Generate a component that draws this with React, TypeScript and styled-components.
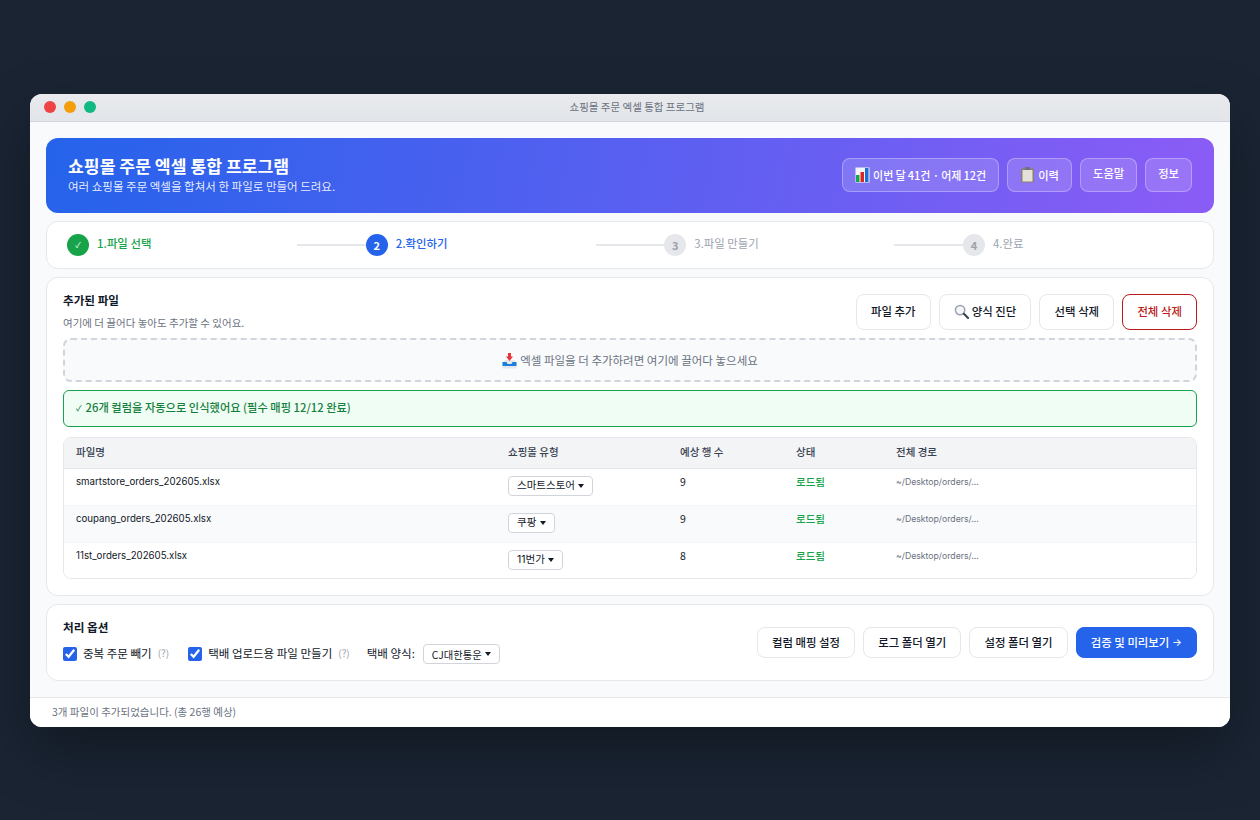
import styled, { createGlobalStyle } from "styled-components"

const GlobalStyle = createGlobalStyle`
    html, body {
        margin: 0;
        padding: 0;
        background: #1a2433;
    }

    * {
        box-sizing: border-box;
    }
`

const Page = styled.div`
    width: 1260px;
    height: 820px;
    padding: 94px 30px 0;
    background: #1a2433;
    color: #111827;
    font-family: "Noto Sans CJK KR", "Noto Sans", sans-serif;
    font-size: 12px;
    overflow: hidden;
`

const Window = styled.div`
    display: flex;
    flex-direction: column;
    height: 633px;
    border-radius: 12px;
    overflow: hidden;
    background: #f8fafc;
    box-shadow: 0 24px 60px rgba(0, 0, 0, 0.3);
`

const TitleBar = styled.div`
    position: relative;
    display: flex;
    align-items: center;
    justify-content: center;
    height: 28px;
    padding: 0 0 2px 14px;
    background: linear-gradient(180deg, #e8eaed, #e2e5e9);
    border-bottom: 1px solid #d1d5db;
    color: #6b7280;
    font-size: 10.5px;
`

const Lights = styled.div`
    position: absolute;
    left: 14px;
    top: 7px;
    display: flex;
    gap: 8px;
`

const Light = styled.span<{ $colour: string }>`
    width: 12px;
    height: 12px;
    border-radius: 50%;
    background: ${p => p.$colour};
`

const Content = styled.div`
    flex: 1;
    display: flex;
    flex-direction: column;
    gap: 8px;
    padding: 16px 16px 16px;
`

const Banner = styled.header`
    display: flex;
    align-items: center;
    justify-content: space-between;
    height: 75px;
    padding: 0 22px 2px;
    border-radius: 12px;
    background: linear-gradient(100deg, #2563eb, #8b5cf6);
    color: white;
`

const BannerTitle = styled.h1`
    margin: -2px 0 0;
    font-size: 17.2px;
    font-weight: 700;
    line-height: 24px;
`

const BannerSub = styled.p`
    margin: 0;
    font-size: 11.5px;
    line-height: 16px;
    color: rgba(255, 255, 255, 0.9);
`

const BannerActions = styled.div`
    display: flex;
    gap: 8px;
`

const BannerButton = styled.div`
    display: flex;
    gap: 3px;
    height: 34px;
    padding: 5px 12px 0;
    border: 1px solid rgba(255, 255, 255, 0.3);
    border-radius: 8px;
    background: rgba(255, 255, 255, 0.15);
    font-size: 11.3px;
    font-weight: 500;
    line-height: 18px;
`

const BannerEmojiButton = styled(BannerButton)`
    align-items: center;
    padding-top: 1px;
`

const BannerStat = styled.span`
    font-size: 11px;
    word-spacing: -0.3px;
`

const Card = styled.section`
    border: 1px solid #e5e7eb;
    border-radius: 12px;
    background: white;
`

const Steps = styled(Card)`
    display: flex;
    align-items: center;
    height: 48px;
    padding: 0 20px;
`

const Step = styled.div`
    flex: 0 0 230px;
    display: flex;
    align-items: center;
    gap: 8px;
`

const StepCircle = styled.span<{ $state: "done" | "active" | "todo" }>`
    display: flex;
    align-items: center;
    justify-content: center;
    width: 22px;
    height: 22px;
    padding-bottom: 1px;
    border-radius: 50%;
    font-size: ${p => (p.$state === "done" ? "8px" : "11px")};
    font-weight: ${p => (p.$state === "done" ? 400 : 700)};
    color: ${p => (p.$state === "todo" ? "#9ca3af" : "white")};
    background: ${p => (p.$state === "done" ? "#16a34a" : p.$state === "active" ? "#2563eb" : "#e5e7eb")};
`

const StepLabel = styled.span<{ $state: "done" | "active" | "todo" }>`
    margin-top: -5px;
    font-size: 11.4px;
    font-weight: ${p => (p.$state === "todo" ? 400 : 500)};
    color: ${p => (p.$state === "done" ? "#16a34a" : p.$state === "active" ? "#2563eb" : "#9ca3af")};
`

const StepLine = styled.span`
    flex: 1;
    height: 2px;
    background: #e5e7eb;
`

const FilesCard = styled(Card)`
    height: 319px;
    padding: 16px;
`

const FilesTop = styled.div`
    display: flex;
    justify-content: space-between;
    height: 36px;
`

const SectionTitle = styled.h2`
    margin: -1px 0 0;
    font-size: 11.6px;
    font-weight: 700;
    line-height: 14px;
`

const SectionHint = styled.p`
    margin: 9px 0 0;
    font-size: 10.5px;
    line-height: 14px;
    color: #6b7280;
`

const ButtonRow = styled.div`
    display: flex;
    gap: 8px;
`

const Button = styled.button<{ $variant?: "primary" | "danger" }>`
    display: flex;
    align-items: center;
    gap: 3px;
    height: 100%;
    padding: 0 14.15px 2px;
    border: 1px solid ${p => (p.$variant === "primary" ? "#2563eb" : p.$variant === "danger" ? "#b91c1c" : "#e5e7eb")};
    border-radius: 8px;
    background: ${p => (p.$variant === "primary" ? "#2563eb" : "white")};
    color: ${p => (p.$variant === "primary" ? "white" : p.$variant === "danger" ? "#b91c1c" : "#111827")};
    font: inherit;
    font-size: 11.4px;
    font-weight: 500;
`

const SmallArrow = styled.span`
    font-family: Inter, sans-serif;
    font-size: 10px;
`

const DropZone = styled.div`
    display: flex;
    align-items: center;
    justify-content: center;
    gap: 3px;
    height: 44px;
    margin-top: 8px;
    border: 2px dashed #d1d5db;
    border-radius: 8px;
    background: #f8fafc;
    color: #6b7280;
    font-size: 11.5px;
`

const DropIcon = styled.span`
    display: flex;
    margin-top: 2px;
`

const Notice = styled.div`
    display: flex;
    align-items: center;
    gap: 4px;
    height: 37px;
    margin-top: 8px;
    padding: 0 12px 3px;
    border: 1px solid #16a34a;
    border-radius: 6px;
    background: #f0fdf4;
    color: #15803d;
    font-size: 11.25px;
    font-weight: 500;
`

const NoticeTick = styled.span`
    font-size: 8px;
`

const Table = styled.div`
    margin-top: 10px;
    border: 1px solid #e5e7eb;
    border-radius: 8px;
    overflow: hidden;
`

const Row = styled.div<{ $shade?: boolean }>`
    display: grid;
    grid-template-columns: 432px 172px 116px 100px 1fr;
    height: 37px;
    border-bottom: 1px solid #f3f4f6;
    background: ${p => (p.$shade ? "#f8fafc" : "white")};

    &:last-child {
        height: 35px;
        border-bottom: 0;
    }
`

const HeadRow = styled(Row)`
    height: 31px;
    border-bottom-color: #e5e7eb;
    background: #f3f4f6;
`

const HeadCell = styled.div`
    padding: 0 12px;
    font-size: 10.5px;
    font-weight: 500;
    line-height: 27px;
    color: #374151;
`

const Cell = styled.div`
    padding: 6px 12px 0;
    font-size: 10.5px;
    line-height: 14px;
`

const FileCell = styled(Cell)`
    font-family: Inter, "Noto Sans CJK KR", sans-serif;
    font-size: 9.7px;
`

const LoadedCell = styled(Cell)`
    color: #16a34a;
    font-weight: 500;
`

const PathCell = styled(Cell)`
    color: #6b7280;
    font-family: Inter, "Noto Sans CJK KR", sans-serif;
    font-size: 8.7px;
`

const Dropdown = styled.span`
    display: inline-flex;
    align-items: center;
    gap: 3.5px;
    height: 20px;
    padding: 0 8px;
    border: 1px solid #d1d5db;
    border-radius: 4px;
    background: white;
    color: #111827;
    font-family: Inter, "Noto Sans CJK KR", sans-serif;
    font-size: 10.5px;
`

const CourierDropdown = styled(Dropdown)`
    gap: 3px;
    font-family: "Noto Sans CJK KR", sans-serif;
    font-size: 10.3px;
`

const SelectCell = styled(Cell)`
    padding-top: 7px;
`

const Caret = styled.span`
    width: 0;
    height: 0;
    border-left: 3px solid transparent;
    border-right: 3px solid transparent;
    border-top: 4px solid #111827;
`

const OptionsCard = styled(Card)`
    display: flex;
    align-items: center;
    justify-content: space-between;
    height: 77px;
    padding: 0 16px;
`

const OptionsLeft = styled.div`
    display: flex;
    flex-direction: column;
    gap: 10px;
`

const OptionRow = styled.div`
    display: flex;
    align-items: center;
    height: 20px;
`

const OptionLabel = styled.label`
    display: flex;
    align-items: center;
    gap: 6px;
    font-size: 11.5px;
`

const OptionText = styled.span`
    padding-bottom: 3px;
`

const Check = styled.input`
    width: 14px;
    height: 14px;
    margin: 0;
    accent-color: #2563eb;
`

const Help = styled.span`
    margin: 0 19px 3px 6px;
    color: #9ca3af;
    font-size: 10px;
`

const CourierLabel = styled.span`
    margin: 0 8px 3px -2px;
    font-size: 11.5px;
`

const OptionButtons = styled(ButtonRow)`
    height: 31px;
`

const StatusBar = styled.footer`
    display: flex;
    align-items: center;
    height: 30px;
    padding: 0 22px 2px;
    border-top: 1px solid #e5e7eb;
    background: white;
    color: #6b7280;
    font-size: 10.5px;
`

const ChartIcon = () => (
    <svg width="15" height="16" viewBox="0 0 15 16">
        <rect x="0.5" y="0.5" width="14" height="15" fill="#f3f4f6" />
        <rect x="1" y="8" width="3.5" height="7" fill="#16a34a" />
        <rect x="5.5" y="5" width="3.5" height="10" fill="#dc2626" />
        <rect x="10" y="1" width="3.5" height="14" fill="#1d6fd1" />
    </svg>
)

const ClipboardIcon = () => (
    <svg width="15" height="16" viewBox="0 0 15 16">
        <rect x="1" y="1.5" width="13" height="14" rx="1" fill="#8a7f6f" />
        <rect x="2.5" y="3" width="10" height="11.5" fill="#e4e1d8" />
        <rect x="5" y="0" width="5" height="3" rx="0.5" fill="#6b7280" />
    </svg>
)

const SearchIcon = () => (
    <svg width="15" height="15" viewBox="0 0 16 16">
        <circle cx="6.5" cy="6.5" r="5" fill="#f3f6fa" stroke="#9ca3af" strokeWidth="1.6" />
        <path d="M10.5 10.5 L15 15" stroke="#374151" strokeWidth="2.2" strokeLinecap="round" />
    </svg>
)

const InboxIcon = () => (
    <svg width="15" height="16" viewBox="0 0 15 16">
        <path d="M0.5 9 L4 7 L11 7 L14.5 9 L14.5 15.5 L0.5 15.5 Z" fill="#e5e7eb" />
        <path d="M0.5 9 L4.5 9 L5.5 11 L9.5 11 L10.5 9 L14.5 9 L14.5 13 L0.5 13 Z" fill="#1d7fd8" />
        <path d="M6 0 L9 0 L9 3.5 L11 3.5 L7.5 8 L4 3.5 L6 3.5 Z" fill="#e5343a" />
    </svg>
)

type Mall = { file: string; mall: string; rows: number }

const malls: Mall[] = [
    { file: "smartstore_orders_202605.xlsx", mall: "스마트스토어", rows: 9 },
    { file: "coupang_orders_202605.xlsx", mall: "쿠팡", rows: 9 },
    { file: "11st_orders_202605.xlsx", mall: "11번가", rows: 8 },
]

export default function App() {
    return (
        <Page>
            <GlobalStyle />
            <Window>
                <TitleBar>
                    <Lights>
                        <Light $colour="#ef4444" />
                        <Light $colour="#f59e0b" />
                        <Light $colour="#10b981" />
                    </Lights>
                    쇼핑몰 주문 엑셀 통합 프로그램
                </TitleBar>
                <Content>
                    <Banner>
                        <div>
                            <BannerTitle>쇼핑몰 주문 엑셀 통합 프로그램</BannerTitle>
                            <BannerSub>여러 쇼핑몰 주문 엑셀을 합쳐서 한 파일로 만들어 드려요.</BannerSub>
                        </div>
                        <BannerActions>
                            <BannerEmojiButton><ChartIcon /><BannerStat>이번 달 41건 · 어제 12건</BannerStat></BannerEmojiButton>
                            <BannerEmojiButton><ClipboardIcon />이력</BannerEmojiButton>
                            <BannerButton>도움말</BannerButton>
                            <BannerButton>정보</BannerButton>
                        </BannerActions>
                    </Banner>

                    <Steps>
                        <Step>
                            <StepCircle $state="done">✓</StepCircle>
                            <StepLabel $state="done">1.파일 선택</StepLabel>
                        </Step>
                        <StepLine />
                        <Step>
                            <StepCircle $state="active">2</StepCircle>
                            <StepLabel $state="active">2.확인하기</StepLabel>
                        </Step>
                        <StepLine />
                        <Step>
                            <StepCircle $state="todo">3</StepCircle>
                            <StepLabel $state="todo">3.파일 만들기</StepLabel>
                        </Step>
                        <StepLine />
                        <Step>
                            <StepCircle $state="todo">4</StepCircle>
                            <StepLabel $state="todo">4.완료</StepLabel>
                        </Step>
                    </Steps>

                    <FilesCard>
                        <FilesTop>
                            <div>
                                <SectionTitle>추가된 파일</SectionTitle>
                                <SectionHint>여기에 더 끌어다 놓아도 추가할 수 있어요.</SectionHint>
                            </div>
                            <ButtonRow>
                                <Button>파일 추가</Button>
                                <Button><SearchIcon />양식 진단</Button>
                                <Button>선택 삭제</Button>
                                <Button $variant="danger">전체 삭제</Button>
                            </ButtonRow>
                        </FilesTop>
                        <DropZone><DropIcon><InboxIcon /></DropIcon>엑셀 파일을 더 추가하려면 여기에 끌어다 놓으세요</DropZone>
                        <Notice><NoticeTick>✓</NoticeTick>26개 컬럼을 자동으로 인식했어요 (필수 매핑 12/12 완료)</Notice>
                        <Table>
                            <HeadRow>
                                <HeadCell>파일명</HeadCell>
                                <HeadCell>쇼핑몰 유형</HeadCell>
                                <HeadCell>예상 행 수</HeadCell>
                                <HeadCell>상태</HeadCell>
                                <HeadCell>전체 경로</HeadCell>
                            </HeadRow>
                            {malls.map((m, i) => (
                                <Row key={m.file} $shade={i === 1}>
                                    <FileCell>{m.file}</FileCell>
                                    <SelectCell>
                                        <Dropdown>{m.mall} <Caret /></Dropdown>
                                    </SelectCell>
                                    <Cell>{m.rows}</Cell>
                                    <LoadedCell>로드됨</LoadedCell>
                                    <PathCell>~/Desktop/orders/...</PathCell>
                                </Row>
                            ))}
                        </Table>
                    </FilesCard>

                    <OptionsCard>
                        <OptionsLeft>
                            <SectionTitle>처리 옵션</SectionTitle>
                            <OptionRow>
                                <OptionLabel><Check type="checkbox" defaultChecked /><OptionText>중복 주문 빼기</OptionText></OptionLabel>
                                <Help>(?)</Help>
                                <OptionLabel><Check type="checkbox" defaultChecked /><OptionText>택배 업로드용 파일 만들기</OptionText></OptionLabel>
                                <Help>(?)</Help>
                                <CourierLabel>택배 양식:</CourierLabel>
                                <CourierDropdown>CJ대한통운 <Caret /></CourierDropdown>
                            </OptionRow>
                        </OptionsLeft>
                        <OptionButtons>
                            <Button>컬럼 매핑 설정</Button>
                            <Button>로그 폴더 열기</Button>
                            <Button>설정 폴더 열기</Button>
                            <Button $variant="primary">검증 및 미리보기 <SmallArrow>→</SmallArrow></Button>
                        </OptionButtons>
                    </OptionsCard>
                </Content>
                <StatusBar>3개 파일이 추가되었습니다. (총 26행 예상)</StatusBar>
            </Window>
        </Page>
    )
}
